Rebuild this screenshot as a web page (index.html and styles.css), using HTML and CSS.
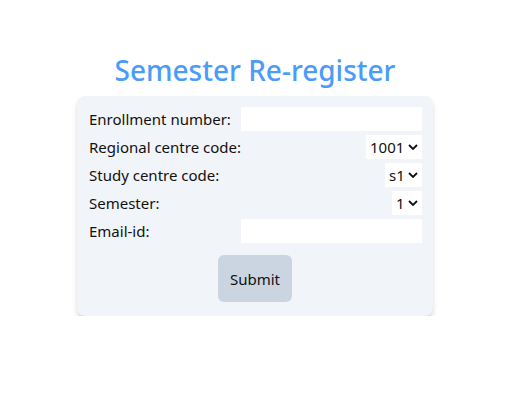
FILE: index.html
```html
<!DOCTYPE html>
<html>
<head>
<meta charset="utf-8">
<link rel="stylesheet" href="styles.css">
</head>
<body>
<div class="page">
  <h1 class="title">Semester Re-register</h1>
  <form class="card">
    <div class="grid">
      <label class="label">Enrollment number:</label>
      <input class="field" type="text">
      <label class="label">Regional centre code:</label>
      <select class="pick"><option>1001</option></select>
      <label class="label">Study centre code:</label>
      <select class="pick"><option>s1</option></select>
      <label class="label">Semester:</label>
      <select class="pick"><option>1</option></select>
      <label class="label">Email-id:</label>
      <input class="field" type="text">
    </div>
    <div class="actions">
      <button class="submit" type="button">Submit</button>
    </div>
  </form>
</div>
</body>
</html>
```
FILE: styles.css
```css
html, body {
  margin: 0;
  padding: 0;
  background: #ffffff;
}
body {
  font-family: "Segoe UI", "Noto Sans", "Open Sans", sans-serif;
  color: #111111;
}
.page {
  width: 510px;
  display: flex;
  flex-direction: column;
  align-items: center;
  padding-top: 52px;
}
.title {
  margin: 0 0 8px 0;
  font-size: 28px;
  line-height: 36px;
  font-weight: 500;
  color: #4b9cf8;
}
.card {
  width: 356px;
  box-sizing: border-box;
  background: #f1f4f8;
  border-radius: 8px;
  padding: 11px 12px 14px 12px;
  box-shadow: 0 4px 6px -1px rgba(0,0,0,0.16), 0 2px 4px -2px rgba(0,0,0,0.12);
}
.grid {
  display: grid;
  grid-template-columns: auto 1fr;
  row-gap: 4px;
  align-items: center;
}
.label {
  font-size: 15px;
  line-height: 24px;
  white-space: nowrap;
}
.field {
  width: 181px;
  height: 24px;
  box-sizing: border-box;
  border: none;
  background: #ffffff;
  padding: 0 4px;
  font: inherit;
  justify-self: end;
}
.pick {
  -webkit-appearance: none;
  appearance: none;
  justify-self: end;
  height: 24px;
  border: none;
  border-radius: 0;
  background-color: #ffffff;
  background-image: url("data:image/svg+xml;utf8,<svg xmlns='http://www.w3.org/2000/svg' width='10' height='6' viewBox='0 0 10 6'><path d='M1 1l4 4 4-4' fill='none' stroke='%23111' stroke-width='1.8'/></svg>");
  background-repeat: no-repeat;
  background-position: right 4px center;
  font-family: inherit;
  font-size: 15px;
  color: #111;
  padding: 0 17px 0 4px;
}
.actions {
  display: flex;
  justify-content: center;
  margin-top: 12px;
}
.submit {
  font-family: inherit;
  font-size: 15px;
  color: #111;
  background: #cbd5e1;
  border: none;
  border-radius: 6px;
  width: 74px;
  height: 47px;
  padding: 0;
}
```
